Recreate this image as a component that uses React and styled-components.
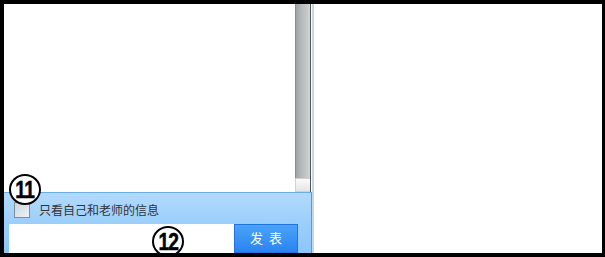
import React from "react";
import styled, { createGlobalStyle } from "styled-components";

const Global = createGlobalStyle`
  html, body { margin: 0; padding: 0; background: #000; }
  * { box-sizing: border-box; }
`;

const Frame = styled.div`
  position: relative;
  width: 605px;
  height: 257px;
  border: 4px solid #000;
  border-right-width: 3px;
  background: #fff;
  display: flex;
  overflow: hidden;
`;

const LeftCol = styled.div`
  width: 308px;
  display: flex;
  flex-direction: column;
`;

const Messages = styled.div`
  flex: 1;
  display: flex;
`;

const MsgArea = styled.div`
  flex: 1;
  background: #fff;
`;

const ScrollBar = styled.div`
  width: 16px;
  display: flex;
  flex-direction: column;
  border-right: 1px solid #4e5356;
  margin-right: 1px;
`;

const Thumb = styled.div`
  flex: 1;
  background: linear-gradient(to right, #6f7578 0px, #9ea3a6 1px, #b4b8ba 6px, #c9cbcc 13px, #d4d6d7 15px);
`;

const ScrollBtn = styled.div`
  height: 14px;
  background: linear-gradient(to bottom, #fafafa, #e6e6e6);
  border: 1px solid #cfd2d4;
  border-right: none;
`;

const Panel = styled.div`
  height: 61px;
  background: linear-gradient(to bottom, #b2dafd 0%, #9dd0fb 45%, #8cc6fa 100%);
  border-top: 1px solid #69ade9;
  border-right: 1px solid #4f9de2;
  display: flex;
  flex-direction: column;
  padding: 9px 13px 0 5px;
`;

const CheckRow = styled.label`
  display: flex;
  align-items: center;
  padding-left: 5px;
  height: 15px;
  gap: 9px;
  font-family: "Noto Sans CJK SC", "Noto Sans", sans-serif;
  font-size: 12px;
  color: #333;
`;

const Box = styled.span`
  width: 16px;
  height: 16px;
  border: 1px solid #7f8d99;
  background: linear-gradient(to bottom right, #c9d5df, #eef3f7);
`;

const InputRow = styled.div`
  display: flex;
  margin-top: 7px;
  height: 30px;
`;

const Input = styled.div`
  flex: 1;
  background: #fff;
`;

const SendBtn = styled.button`
  width: 64px;
  border: 1px solid #1f73db;
  background: linear-gradient(to bottom, #4aa3f7, #2b83f2);
  color: #fff;
  font-family: "Noto Sans CJK SC", sans-serif;
  font-size: 13px;
  letter-spacing: 6px;
  padding: 0 0 2px 6px;
  display: flex;
  align-items: center;
  justify-content: center;
`;

const Divider = styled.div`
  width: 2px;
  background: #c6d6e6;
`;

const RightPane = styled.div`
  flex: 1;
  background: #fff;
`;

const Badge = styled.div`
  position: absolute;
  left: ${(p) => p.x}px;
  top: ${(p) => p.y}px;
  width: 32px;
  height: 31px;
  border-radius: 50%;
  border: 2px solid #000;
  background: #fff;
  display: flex;
  align-items: center;
  justify-content: center;
  font-family: "Liberation Sans", Arial, sans-serif;
  font-weight: 900;
  font-size: 24px;
  line-height: 1;
  letter-spacing: -1px;
  color: #000;
  span { display: inline-block; transform: scaleX(0.8); -webkit-text-stroke: 0.5px #000; }
`;

export default function App() {
  return (
    <>
      <Global />
      <Frame>
        <LeftCol>
          <Messages>
            <MsgArea />
            <ScrollBar>
              <Thumb />
              <ScrollBtn />
            </ScrollBar>
          </Messages>
          <Panel>
            <CheckRow>
              <Box />
              只看自己和老师的信息
            </CheckRow>
            <InputRow>
              <Input />
              <SendBtn>发表</SendBtn>
            </InputRow>
          </Panel>
        </LeftCol>
        <Divider />
        <RightPane />
        <Badge x={5} y={170}><span>11</span></Badge>
        <Badge x={148} y={222}><span>12</span></Badge>
      </Frame>
    </>
  );
}
